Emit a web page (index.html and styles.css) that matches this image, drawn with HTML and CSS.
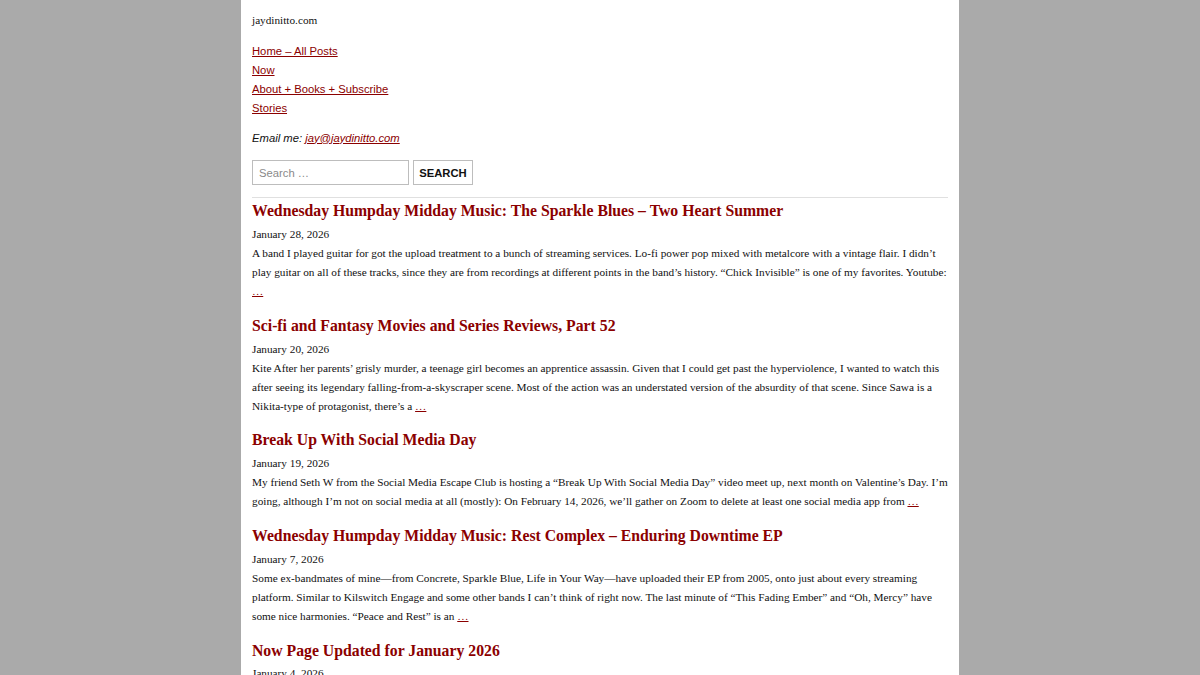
FILE: index.html
```html
<!DOCTYPE html>
<html lang="en">
<head>
<meta charset="utf-8">
<title>jaydinitto.com</title>
<link rel="stylesheet" href="styles.css">
</head>
<body>
<div class="page">
  <header class="site-header">
    <div class="site-title">jaydinitto.com</div>
    <nav class="site-nav">
      <a href="#">Home – All Posts</a>
      <a href="#">Now</a>
      <a href="#">About + Books + Subscribe</a>
      <a href="#">Stories</a>
    </nav>
    <p class="email">Email me: <a href="#">jay@jaydinitto.com</a></p>
    <form class="search">
      <input type="search" class="search-field" placeholder="Search …">
      <button type="button" class="search-btn">SEARCH</button>
    </form>
  </header>
  <main class="posts">
    <article class="post">
      <h2 class="post-title"><a href="#">Wednesday Humpday Midday Music: The Sparkle Blues – Two Heart Summer</a></h2>
      <div class="post-date">January 28, 2026</div>
      <p class="post-excerpt">A band I played guitar for got the upload treatment to a bunch of streaming services. Lo-fi power pop mixed with metalcore with a vintage flair. I didn’t play guitar on all of these tracks, since they are from recordings at different points in the band’s history. “Chick Invisible” is one of my favorites. Youtube: <a href="#">…</a></p>
    </article>
    <article class="post">
      <h2 class="post-title"><a href="#">Sci-fi and Fantasy Movies and Series Reviews, Part 52</a></h2>
      <div class="post-date">January 20, 2026</div>
      <p class="post-excerpt">Kite After her parents’ grisly murder, a teenage girl becomes an apprentice assassin. Given that I could get past the hyperviolence, I wanted to watch this after seeing its legendary falling-from-a-skyscraper scene. Most of the action was an understated version of the absurdity of that scene. Since Sawa is a Nikita-type of protagonist, there’s a <a href="#">…</a></p>
    </article>
    <article class="post">
      <h2 class="post-title"><a href="#">Break Up With Social Media Day</a></h2>
      <div class="post-date">January 19, 2026</div>
      <p class="post-excerpt">My friend Seth W from the Social Media Escape Club is hosting a “Break Up With Social Media Day” video meet up, next month on Valentine’s Day. I’m going, although I’m not on social media at all (mostly): On February 14, 2026, we’ll gather on Zoom to delete at least one social media app from <a href="#">…</a></p>
    </article>
    <article class="post">
      <h2 class="post-title"><a href="#">Wednesday Humpday Midday Music: Rest Complex – Enduring Downtime EP</a></h2>
      <div class="post-date">January 7, 2026</div>
      <p class="post-excerpt">Some ex-bandmates of mine—from Concrete, Sparkle Blue, Life in Your Way—have uploaded their EP from 2005, onto just about every streaming platform. Similar to Kilswitch Engage and some other bands I can’t think of right now. The last minute of “This Fading Ember” and “Oh, Mercy” have some nice harmonies. “Peace and Rest” is an <a href="#">…</a></p>
    </article>
    <article class="post">
      <h2 class="post-title"><a href="#">Now Page Updated for January 2026</a></h2>
      <div class="post-date">January 4, 2026</div>
    </article>
  </main>
</div>
</body>
</html>
```
FILE: styles.css
```css
html, body {
  margin: 0;
  padding: 0;
  background: #aaaaaa;
}
body {
  font-family: "Liberation Serif", "Times New Roman", serif;
  font-size: 11.25px;
  line-height: 1.7;
  color: #111;
}
a {
  color: #8b0000;
}
.page {
  width: 696px;
  margin: 0 auto;
  background: #fff;
  padding: 10.5px 11px 40px;
  min-height: 675px;
}
.site-title {
  color: #111;
}
.site-nav {
  display: flex;
  flex-direction: column;
  align-items: flex-start;
  margin-top: 12px;
  font-family: "Liberation Sans", Arial, sans-serif;
}
.email {
  margin: 10.5px 0 0;
  font-family: "Liberation Sans", Arial, sans-serif;
  font-style: italic;
}
.search {
  display: flex;
  gap: 4px;
  margin-top: 12.5px;
  padding-bottom: 12px;
  border-bottom: 1px solid #e0e0e0;
}
.search-field {
  box-sizing: border-box;
  width: 157px;
  height: 25px;
  margin: 0;
  border: 1px solid #bdbdbd;
  padding: 0 6px;
  font-family: "Liberation Sans", Arial, sans-serif;
  font-size: 11.25px;
  color: #111;
  background: #fff;
  outline: none;
}
.search-field::placeholder {
  color: #8a8a8a;
}
.search-btn {
  box-sizing: border-box;
  height: 25px;
  width: 60px;
  margin: 0;
  padding: 0;
  border: 1px solid #bdbdbd;
  background: #fff;
  font-family: "Liberation Sans", Arial, sans-serif;
  font-weight: bold;
  font-size: 11.25px;
  color: #111;
}
.post {
  margin-bottom: 11.4px;
}
.post-title {
  margin: 0;
  font-size: 15.75px;
  line-height: 26.7px;
  font-weight: bold;
}
.post-title a {
  text-decoration: none;
  color: #8b0000;
}
.post-excerpt {
  margin: 0;
}
```
